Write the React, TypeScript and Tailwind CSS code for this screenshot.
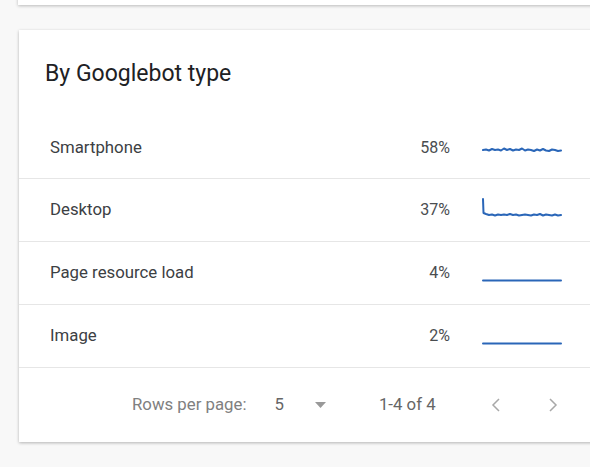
import React from "react";

const rows = [
  {
    label: "Smartphone",
    pct: "58%",
    d: "M1 14 L4 13.5 L7 14.5 L10 13 L13 14 L16 13.5 L19 14.5 L22 12.5 L25 14 L28 13 L31 14.5 L34 13.5 L37 14 L40 12.5 L43 14.5 L46 13.5 L49 14 L52 15 L55 13.5 L58 14.5 L61 13 L64 14.5 L67 15 L70 13.5 L73 14 L76 15 L79 14.5",
  },
  {
    label: "Desktop",
    pct: "37%",
    d: "M1 1 L1.5 15 L4 16 L7 17 L10 16.5 L13 17.5 L16 16.5 L19 17 L22 16.5 L25 17 L28 16 L31 17 L34 16.5 L37 17.5 L40 17 L43 16.5 L46 17 L49 17.5 L52 16.5 L55 17 L58 16 L61 17.5 L64 16.5 L67 17 L70 17.5 L73 16.5 L76 17.5 L79 17",
  },
  { label: "Page resource load", pct: "4%", d: "M1 19.5 L79 19.5" },
  { label: "Image", pct: "2%", d: "M1 19.5 L79 19.5" },
];

function Sparkline({ d }: { d: string }) {
  return (
    <svg width="80" height="24" viewBox="0 0 80 24" fill="none" aria-hidden>
      <path d={d} stroke="#2a66b8" strokeWidth="2" strokeLinejoin="round" strokeLinecap="round" />
    </svg>
  );
}

export default function App() {
  return (
    <div
      className="h-[467px] w-[590px] overflow-hidden bg-[#f8f8f8] text-[#3c4043]"
      style={{ fontFamily: "Roboto, 'Liberation Sans', sans-serif" }}
    >
      {/* previous card edge */}
      <div className="ml-[18px] -mt-[20px] h-[25px] w-[620px] bg-white shadow-[0_1px_3px_rgba(0,0,0,0.25)]" />

      {/* By Googlebot type card */}
      <div className="ml-[19px] mt-[25px] w-[620px] bg-white shadow-[0_1px_3px_rgba(0,0,0,0.28)]">
        <div className="pl-[26px] pt-[30px] pb-[29px]">
          <h2 className="text-[23px] leading-[28px] text-[#202124]">By Googlebot type</h2>
        </div>

        {rows.map((r, i) => (
          <div
            key={r.label}
            className={`flex items-center border-b border-[#e6e6e6] pl-[31px] ${i === 0 ? "h-[62px]" : "h-[63px]"}`}
          >
            <div className="flex w-[512px] items-center">
              <span className="flex-1 text-[16.8px]">{r.label}</span>
              <span className="text-[16px] text-[#4a4d50]">{r.pct}</span>
              <span className="ml-[32px] flex">
                <Sparkline d={r.d} />
              </span>
            </div>
          </div>
        ))}

        <div className="flex h-[74px] items-center pl-[113px] text-[16.8px] text-[#808080]">
          <span>Rows per page:</span>
          <span className="ml-[28px] text-[#666]">5</span>
          <svg className="ml-[31px]" width="11" height="6" viewBox="0 0 11 6" aria-hidden>
            <path d="M0 0 L11 0 L5.5 6 Z" fill="#999" />
          </svg>
          <span className="ml-[53px] text-[#666]">1-4 of 4</span>
          <svg className="ml-[55px]" width="9" height="14" viewBox="0 0 9 14" fill="none" aria-hidden>
            <path d="M8 1 L2 7 L8 13" stroke="#a8a8a8" strokeWidth="1.5" />
          </svg>
          <svg className="ml-[49px]" width="9" height="14" viewBox="0 0 9 14" fill="none" aria-hidden>
            <path d="M1 1 L7 7 L1 13" stroke="#a8a8a8" strokeWidth="1.5" />
          </svg>
        </div>
      </div>
    </div>
  );
}
